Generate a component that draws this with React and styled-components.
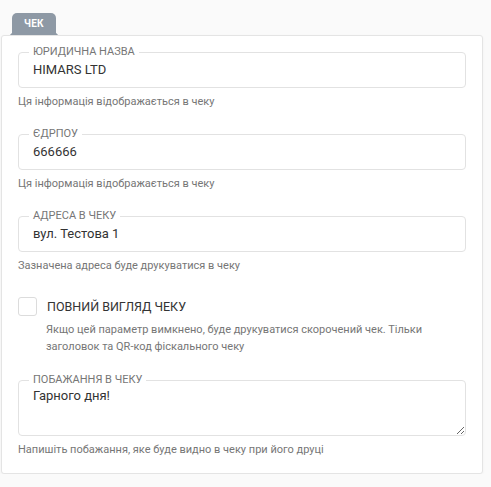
import React from 'react';
import styled, { createGlobalStyle } from 'styled-components';

const GlobalStyle = createGlobalStyle`
    body {
        margin: 0;
        background: #fafafa;
        font-family: Roboto, 'Liberation Sans', sans-serif;
    }
`

const Page = styled.div`
    width: 482px;
    padding: 12px 0 0 1px;
`

const Tab = styled.div`
    position: relative;
    display: inline-flex;
    align-items: center;
    height: 22px;
    margin-left: 11px;
    padding: 0 12px;
    background: #8e99a5;
    border-radius: 5px 5px 0 0;
    color: #fff;
    font-size: 10px;
    font-weight: 700;
    letter-spacing: 0.2px;

    &::before, &::after {
        content: '';
        position: absolute;
        bottom: 0;
        width: 4px;
        height: 4px;
    }
    &::before {
        left: -4px;
        background: radial-gradient(circle at 0 0, transparent 4px, #8e99a5 4.5px);
    }
    &::after {
        right: -4px;
        background: radial-gradient(circle at 100% 0, transparent 4px, #8e99a5 4.5px);
    }
`

const Card = styled.div`
    display: flex;
    flex-direction: column;
    gap: 25px;
    background: #fff;
    border: 1px solid #e4e4e4;
    border-radius: 3px;
    box-shadow: 0 1px 3px rgba(0, 0, 0, 0.04);
    padding: 16px;
`

const Field = styled.div`
    display: flex;
    flex-direction: column;
`

const Box = styled.div`
    position: relative;
    border: 1px solid #e2e2e2;
    border-radius: 4px;
    height: ${p => p.tall ? 54 : 34}px;
    display: flex;
    align-items: ${p => p.tall ? 'flex-start' : 'center'};
`

const Legend = styled.span`
    position: absolute;
    top: -7px;
    left: 10px;
    padding: 0 4px;
    background: #fff;
    color: #767676;
    font-size: 11px;
    line-height: 12px;
`

const Input = styled.input`
    border: none;
    outline: none;
    background: transparent;
    width: 100%;
    padding: 0 14px;
    font-family: inherit;
    font-size: 13px;
    color: #333;
`

const TextArea = styled.textarea`
    border: none;
    outline: none;
    background: transparent;
    width: 100%;
    height: 100%;
    box-sizing: border-box;
    padding: 7px 14px;
    font-family: inherit;
    font-size: 13px;
    line-height: 16px;
    color: #333;
    resize: vertical;
`

const Helper = styled.div`
    margin-top: 7px;
    font-size: 11px;
    line-height: 14px;
    color: #767676;
`

const CheckRow = styled.label`
    display: flex;
    align-items: center;
    gap: 10px;
    font-size: 12.5px;
    color: #333;
    height: 18px;
`

const CheckBox = styled.span`
    width: 17px;
    height: 17px;
    border: 1px solid #dcdcdc;
    border-radius: 3px;
    background: #fff;
`

const Note = styled.div`
    margin: 5px 0 0 28px;
    font-size: 11px;
    line-height: 17px;
    color: #767676;
`

const fields = [
    { label: 'ЮРИДИЧНА НАЗВА', value: 'HIMARS LTD', help: 'Ця інформація відображається в чеку' },
    { label: 'ЄДРПОУ', value: '666666', help: 'Ця інформація відображається в чеку' },
    { label: 'АДРЕСА В ЧЕКУ', value: 'вул. Тестова 1', help: 'Зазначена адреса буде друкуватися в чеку' },
];

export default function App() {
    return (
        <Page>
            <GlobalStyle />
            <Tab>ЧЕК</Tab>
            <Card>
                {fields.map(f => (
                    <Field key={f.label}>
                        <Box>
                            <Legend>{f.label}</Legend>
                            <Input defaultValue={f.value} />
                        </Box>
                        <Helper>{f.help}</Helper>
                    </Field>
                ))}
                <Field>
                    <CheckRow>
                        <CheckBox />
                        ПОВНИЙ ВИГЛЯД ЧЕКУ
                    </CheckRow>
                    <Note>
                        Якщо цей параметр вимкнено, буде друкуватися скорочений чек. Тільки<br />
                        заголовок та QR-код фіскального чеку
                    </Note>
                </Field>
                <Field>
                    <Box tall>
                        <Legend>ПОБАЖАННЯ В ЧЕКУ</Legend>
                        <TextArea defaultValue="Гарного дня!" />
                    </Box>
                    <Helper>Напишіть побажання, яке буде видно в чеку при його друці</Helper>
                </Field>
            </Card>
        </Page>
    );
}
